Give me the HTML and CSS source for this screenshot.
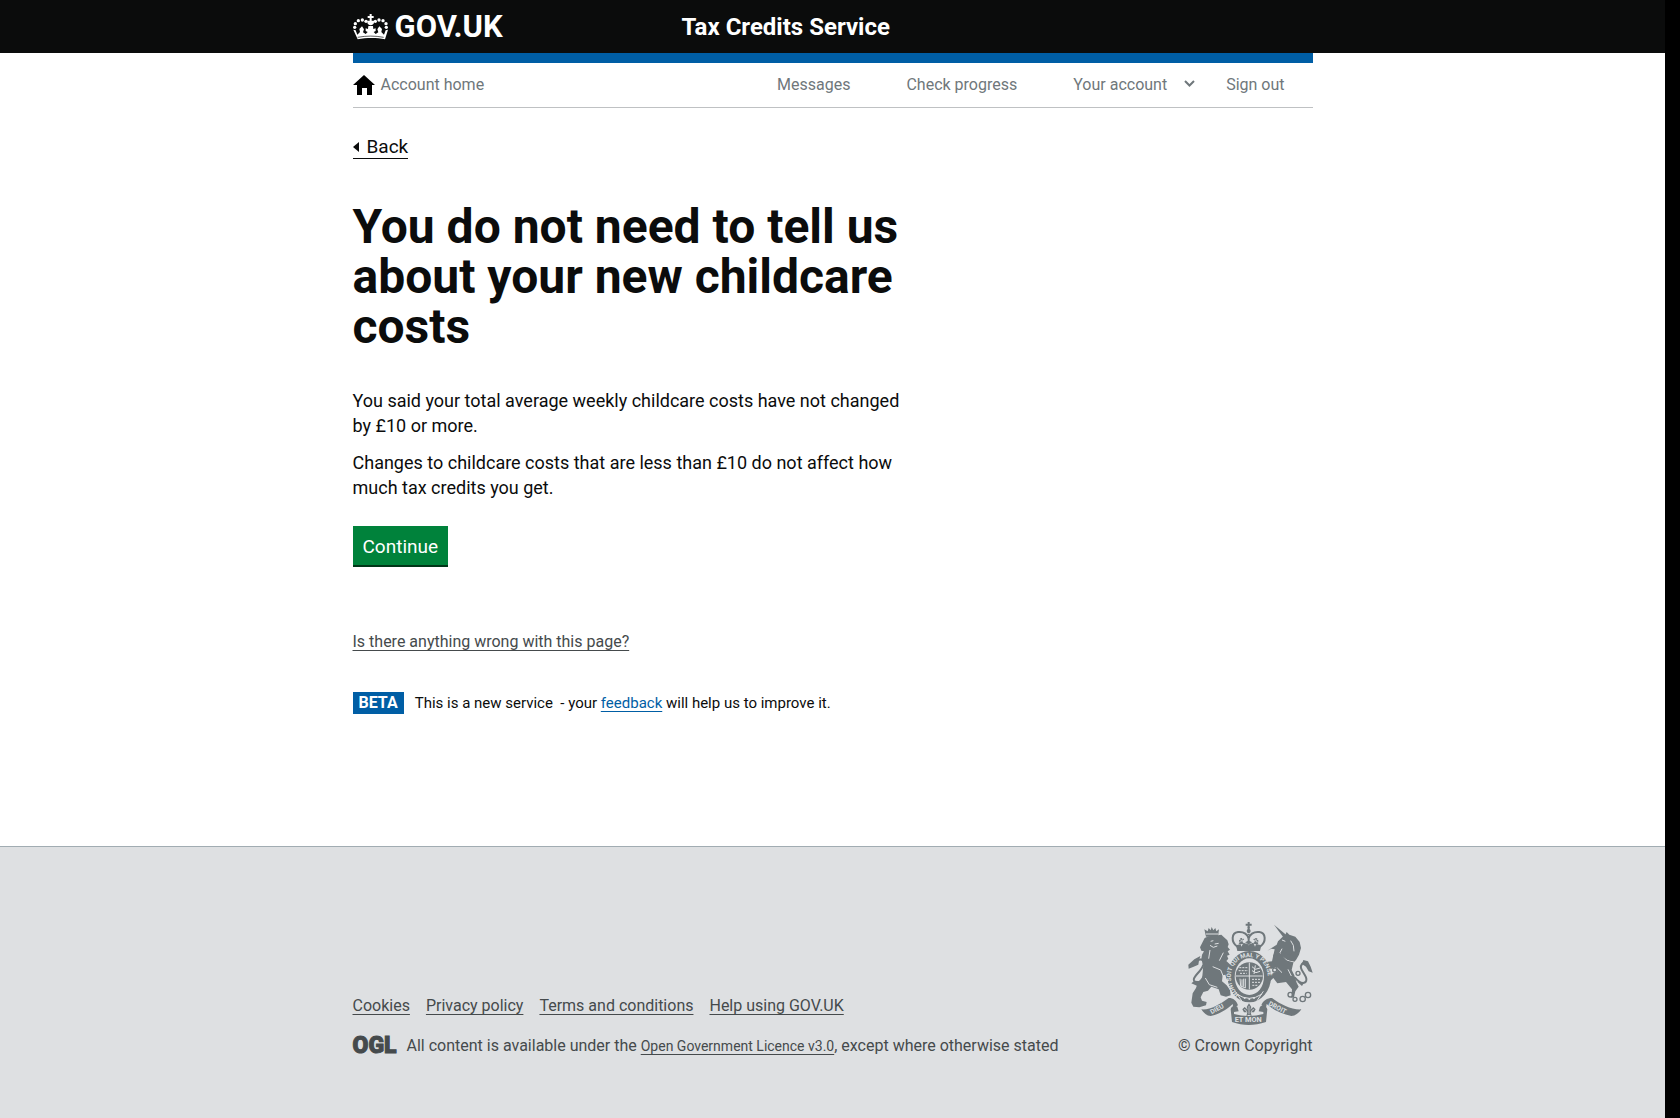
FILE: index.html
```html
<!DOCTYPE html>
<html lang="en">
<head>
<meta charset="utf-8">
<meta name="viewport" content="width=device-width, initial-scale=1">
<title>You do not need to tell us about your new childcare costs</title>
<link rel="stylesheet" href="styles.css">
</head>
<body>
<header class="header">
  <div class="wrap header-row">
    <a class="logo" href="#">
      <svg class="crown" viewBox="24 38 105 78" fill="currentColor" aria-hidden="true">
        <path d="M74 38h6v6h6v6h-6v8h7v5c0 5-4 8-10 9-6-1-10-4-10-9v-5h7v-8h-6v-6h6z"/>
        <circle cx="63" cy="60" r="5"/><circle cx="52" cy="56" r="5"/><circle cx="40" cy="58" r="5"/><circle cx="31" cy="67" r="5"/><circle cx="29" cy="78" r="5"/>
        <circle cx="91" cy="60" r="5"/><circle cx="102" cy="56" r="5"/><circle cx="114" cy="58" r="5"/><circle cx="123" cy="67" r="5"/><circle cx="124" cy="78" r="5"/>
        <path d="M25 85l7 2 5 13 8-8-2-9 8-8 6 9-3 9 8 5 6-6-6-3v-8l7 2 1-9h14l1 9 7-2v8l-6 3 6 6 8-5-3-9 6-9 8 8-2 9 8 8 5-13 7-2-9 29c-24-5-56-5-82 0z"/>
        <path d="M38 108c26-5 52-5 78 0" fill="none" stroke="#0b0c0c" stroke-width="2"/>
      </svg>
      <span>GOV.UK</span>
    </a>
    <a class="service" href="#">Tax Credits Service</a>
  </div>
</header>
<div class="wrap">
  <nav class="nav" aria-label="Account">
    <a class="home" href="#">
      <svg class="house" viewBox="0 0 22 20" aria-hidden="true"><path d="M11 0l11 10h-3v10h-5v-7H9v7H4V10H0z"/></svg>
      Account home
    </a>
    <div class="nav-links">
      <a href="#">Messages</a>
      <a href="#">Check progress</a>
      <button class="account" type="button">Your account
        <svg class="caret" viewBox="0 0 11 10" aria-hidden="true"><path d="M1 1l4.500 4.500L10 1" fill="none" stroke="currentColor" stroke-width="2"/></svg>
      </button>
      <a href="#">Sign out</a>
    </div>
  </nav>
  <a class="back" href="#">Back</a>
  <main class="content">
    <h1>You do not need to tell us about your new childcare costs</h1>
    <p>You said your total average weekly childcare costs have not changed by £10 or more.</p>
    <p>Changes to childcare costs that are less than £10 do not affect how much tax credits you get.</p>
    <button class="continue" type="button">Continue</button>
    <div class="problem"><a href="#">Is there anything wrong with this page?</a></div>
    <div class="phase">
      <strong class="tag">BETA</strong>
      <span class="phase-text">This is a new service &nbsp;- your <a href="#">feedback</a> will help us to improve it.</span>
    </div>
  </main>
</div>
<footer class="footer">
  <div class="wrap footer-row">
    <div>
      <ul class="footer-links">
        <li><a href="#">Cookies</a></li>
        <li><a href="#">Privacy policy</a></li>
        <li><a href="#">Terms and conditions</a></li>
        <li><a href="#">Help using GOV.UK</a></li>
      </ul>
      <div class="licence">
        <span class="ogl">OGL</span>
        <p>All content is available under the <a href="#">Open Government Licence v3.0</a>, except where otherwise stated</p>
      </div>
    </div>
    <a class="copyright" href="#">
      <svg class="crest" viewBox="84 38 375 309" fill="currentColor" aria-hidden="true">
        <!-- crown -->
        <g fill="none" stroke="currentColor" stroke-width="6">
          <path d="M232 112c-20-14-18-42 2-44 18-2 30 8 32 20 2-12 14-22 32-20 20 2 22 30 2 44"/>
          <path d="M266 52v58M242 104c-6-12 2-20 8-12M290 104c6-12-2-20-8-12" stroke-dasharray="5 2"/>
        </g>
        <path d="M263 38h6v5h6v6h-6v10h-6V49h-6v-6h6z"/>
        <circle cx="266" cy="65" r="6"/>
        <path d="M228 108c25-7 51-7 76 0l-4 17h-68zM246 93l-4 7-7 2 7 3 2 7 4-7 8-3-7-2zM266 88l-4 8-7 3 7 3 4 8 4-8 7-3-7-3zM286 93l-4 7-7 2 7 3 3 7 3-7 8-3-7-2z"/>
        <!-- lion -->
        <path d="M138 82l-5-22 10 6 3-10 6 7 3-10 5 10 6-7 3 10 8-6-3 22z"/>
        <path d="M138 74h36" stroke="#dee0e2" stroke-width="3"/>
        <path d="M134 86l12-5 28-3 10-2 8 8 10 9 4 12-3 8 7 8-7 5 6 10-8 3 4 9-6 7 13 12 7 14-2 17-7 16-10-4-4-14-8 2-2 18 14 12 10 14 2 16-14 4-16-4-6-18-22-8-10 12-14 4-8 16 4 10 14 4-2 10-20 6-18-2-6-12 4-28 10-16 4-12 14-14 2-20 2-24-6-16 2-14 6-10-8-2-4-10z"/>
        <path d="M152 96l8-2M164 104l12-2M150 108l10 6 12-4M150 122l-4 26M190 130l-12 24M158 172l24 10 10 24M136 206l12 20 24 8" fill="none" stroke="#dee0e2" stroke-width="3"/>
        <path d="M132 200c-12 22-24 24-30 14-6-12 22-26 28-48 4-18-12-20-24-8" fill="none" stroke="currentColor" stroke-width="6"/>
        <path d="M86 178l-1-12 18-16 18-10-4 14-2 12-14 6zM94 222l10-8 18 2-10 14z"/>
        <!-- unicorn -->
        <path d="M342 46l38 32-9 7z"/>
        <path d="M350 106l4-10 14-14 8-6 4-8 8 8 18 6 13 16 4 18-6 20-9 16-8 8-5 22 8 16 7 22 6 12-10 14-4 18-8 2 2-26-18-22-26 4-12-16-18 18-10-4 18-24 22-10-4-12-26 8-8 10 8 8-12 2-8-18 12-14-18-4-14 8-4-10 12-12 28 6 18-2 4-18 4-18-10-2-12 6z"/>
        <path d="M366 118l-6 12 20 22 22 6M366 92l10 4M392 94l8 14 2 18M352 176l14 14M384 180l10 20" fill="none" stroke="#dee0e2" stroke-width="3"/>
        <path d="M368 129l7 6 2-7 6 9 3-7 4 10 6-7 1 11 8-4-4 16c-18-2-31-11-41-23z"/>
        <path d="M404 204c24 28 40 16 34 0-8-18-22-28-12-40 8-8 16 0 18 8" fill="none" stroke="currentColor" stroke-width="6"/>
        <path d="M426 164l4-12 14 4 8 16 6 18-12-4-8-14zM412 218l14 12 6-10z"/>
        <g fill="none" stroke="currentColor" stroke-width="4">
          <circle cx="346" cy="141" r="5"/><circle cx="344" cy="182" r="6"/><circle cx="414" cy="192" r="6"/><circle cx="391" cy="256" r="7"/><circle cx="405" cy="270" r="6"/><circle cx="428" cy="269" r="8"/><circle cx="444" cy="257" r="8"/>
        </g>
        <!-- garter and shield -->
        <ellipse cx="268" cy="202" rx="65" ry="77"/>
        <ellipse cx="268" cy="202" rx="44" ry="55" fill="#dee0e2"/>
        <circle cx="268" cy="200" r="41"/>
        <path id="garter" d="M237 256C192 214 213 143 268 143S343 214 299 256" fill="none"/>
        <text class="motto motto-garter"><textPath href="#garter">HONI SOIT QUI MAL Y PENSE</textPath></text>
        <g fill="none" stroke="#dee0e2" stroke-width="3">
          <path d="M228 200h80M268 160v80"/>
          <path d="M238 175h24M236 184h28M240 192h20M276 210h26M276 219h26M277 228h18" stroke-dasharray="6 3"/>
          <path d="M276 172l10 8 14-4M276 184l12 6 12-4M286 168l-4 26"/>
          <path d="M240 208l2 22 14 6V208M246 210v22M251 208v24"/>
          <path d="M230 254q38 26 76 0M226 246l20 30M310 246l-20 30"/>
        </g>
        <g fill="#dee0e2"><circle cx="254" cy="266" r="3"/><circle cx="268" cy="269" r="3"/><circle cx="282" cy="266" r="3"/></g>
        <path d="M267 282l7 11-3 8 9-8 7 7-5 9h-10l3 11-8-4-8 4 3-11h-10l-5-9 7-7 9 8-3-8z"/>
        <path d="M267 290v24M252 300q8 2 8 8M282 300q-8 2-8 8" fill="none" stroke="#dee0e2" stroke-width="2"/>
        <!-- motto ribbon -->
        <path d="M124 300c28 2 54-14 82-34 14 0 24 8 28 22l-14 8-2-12c-20 18-40 30-66 36-12 0-20-8-28-20z"/>
        <path d="M424 300c-28 2-62-14-88-34-14 0-28 8-32 22l14 8 2-12c20 18 48 30 74 36 12 0 22-8 30-20z"/>
        <path d="M212 300c2-10 12-14 20-8l4 14-14 2v6c28 8 60 8 88 0v-6l-14-2 4-14c8-6 20-2 22 8l-4 38c-36 12-68 12-102 0z"/>
        <text class="motto" transform="translate(155 315) rotate(-29)">DIEU</text>
        <text class="motto" transform="translate(324 287) rotate(28)">DROIT</text>
        <text class="motto motto-large" x="224" y="339">ET MON</text>
      </svg>
      <span>© Crown Copyright</span>
    </a>
  </div>
</footer>
</body>
</html>
```
FILE: styles.css
```css
* { box-sizing: border-box; }

html { background: #000; }

body {
  display: flex;
  flex-direction: column;
  min-height: 100vh;
  margin: 0 15px 0 0;
  background: #fff;
  color: #0b0c0c;
  font-family: Roboto, "Liberation Sans", sans-serif;
  font-size: 16px;
  line-height: 20px;
}

h1, p, ul { margin: 0; padding: 0; }

.wrap {
  width: 100%;
  max-width: 960px;
  margin: 0 auto;
}

.header {
  background: #0b0c0c;
}

.header-row {
  display: grid;
  grid-template-columns: 329px 1fr;
  align-items: center;
  height: 53px;
}

.header a {
  color: #fff;
  font-weight: 700;
  text-decoration: none;
}

.logo {
  display: flex;
  align-items: center;
  gap: 7px;
  font-size: 31px;
  line-height: 30px;
}

.crown { width: 35px; height: 26px; }

.service { font-size: 24px; line-height: 30px; }

.nav {
  display: flex;
  justify-content: space-between;
  align-items: center;
  height: 55px;
  padding-right: 28px;
  border-top: 10px solid #005ea5;
  border-bottom: 1px solid #bfc1c3;
}

.nav a, .account { color: #6f777b; text-decoration: none; }

.home { display: flex; align-items: center; gap: 6px; }

.house { width: 22px; height: 20px; fill: #000; }

.nav-links { display: flex; gap: 56px; }

.account {
  display: flex;
  align-items: center;
  gap: 17px;
  margin-right: -25px;
  padding: 0;
  border: 0;
  background: none;
  font: inherit;
}

.caret { width: 11px; height: 10px; }

.back {
  display: inline-flex;
  align-items: center;
  gap: 8px;
  margin-top: 27px;
  border-bottom: 1px solid #0b0c0c;
  color: #0b0c0c;
  font-size: 19px;
  line-height: 23px;
  text-decoration: none;
}

.back::before {
  content: "";
  border: 5px solid transparent;
  border-right: 6px solid #0b0c0c;
  border-left: 0;
}

.content {
  max-width: 560px;
  padding: 43px 0 132px;
}

h1 {
  margin-bottom: 36px;
  font-size: 48px;
  line-height: 50px;
}

.content p {
  margin-bottom: 12px;
  font-size: 18px;
  line-height: 25px;
}

.continue {
  height: 39px;
  margin-top: 14px;
  padding: 2px 10px 0;
  border: 0;
  background: #00823b;
  box-shadow: 0 2px 0 #003618;
  color: #fff;
  font: inherit;
  font-size: 19px;
}

.problem { margin-top: 67px; }

.problem a, .footer a { color: #454a4c; }

a { text-underline-offset: 3px; }

.phase {
  display: flex;
  align-items: center;
  gap: 11px;
  margin-top: 40px;
}

.phase-text { font-size: 15px; }

.phase a { color: #005ea5; }

.tag {
  padding: 1px 6px;
  background: #005ea5;
  color: #fff;
}

.footer {
  flex: 1;
  padding: 75px 0 50px;
  border-top: 1px solid #a1acb2;
  background: #dee0e2;
  color: #454a4c;
}

.footer-row {
  display: flex;
  justify-content: space-between;
  align-items: flex-end;
}

.footer-links {
  display: flex;
  gap: 16px;
  margin-bottom: 20px;
  list-style: none;
}

.licence { display: flex; align-items: center; gap: 10px; }

.licence a { font-size: 14px; }

.ogl {
  font-size: 23px;
  font-weight: 900;
  -webkit-text-stroke: 1px currentColor;
}

.copyright {
  display: flex;
  flex-direction: column;
  align-items: flex-end;
  gap: 11px;
}

.footer .copyright { text-decoration: none; }

.crest { width: 125px; height: 103px; color: #6f777b; }

.motto { fill: #dee0e2; font-size: 20px; font-weight: 700; }

.motto-garter { font-size: 18px; }

.motto-large { font-size: 22px; }
```
